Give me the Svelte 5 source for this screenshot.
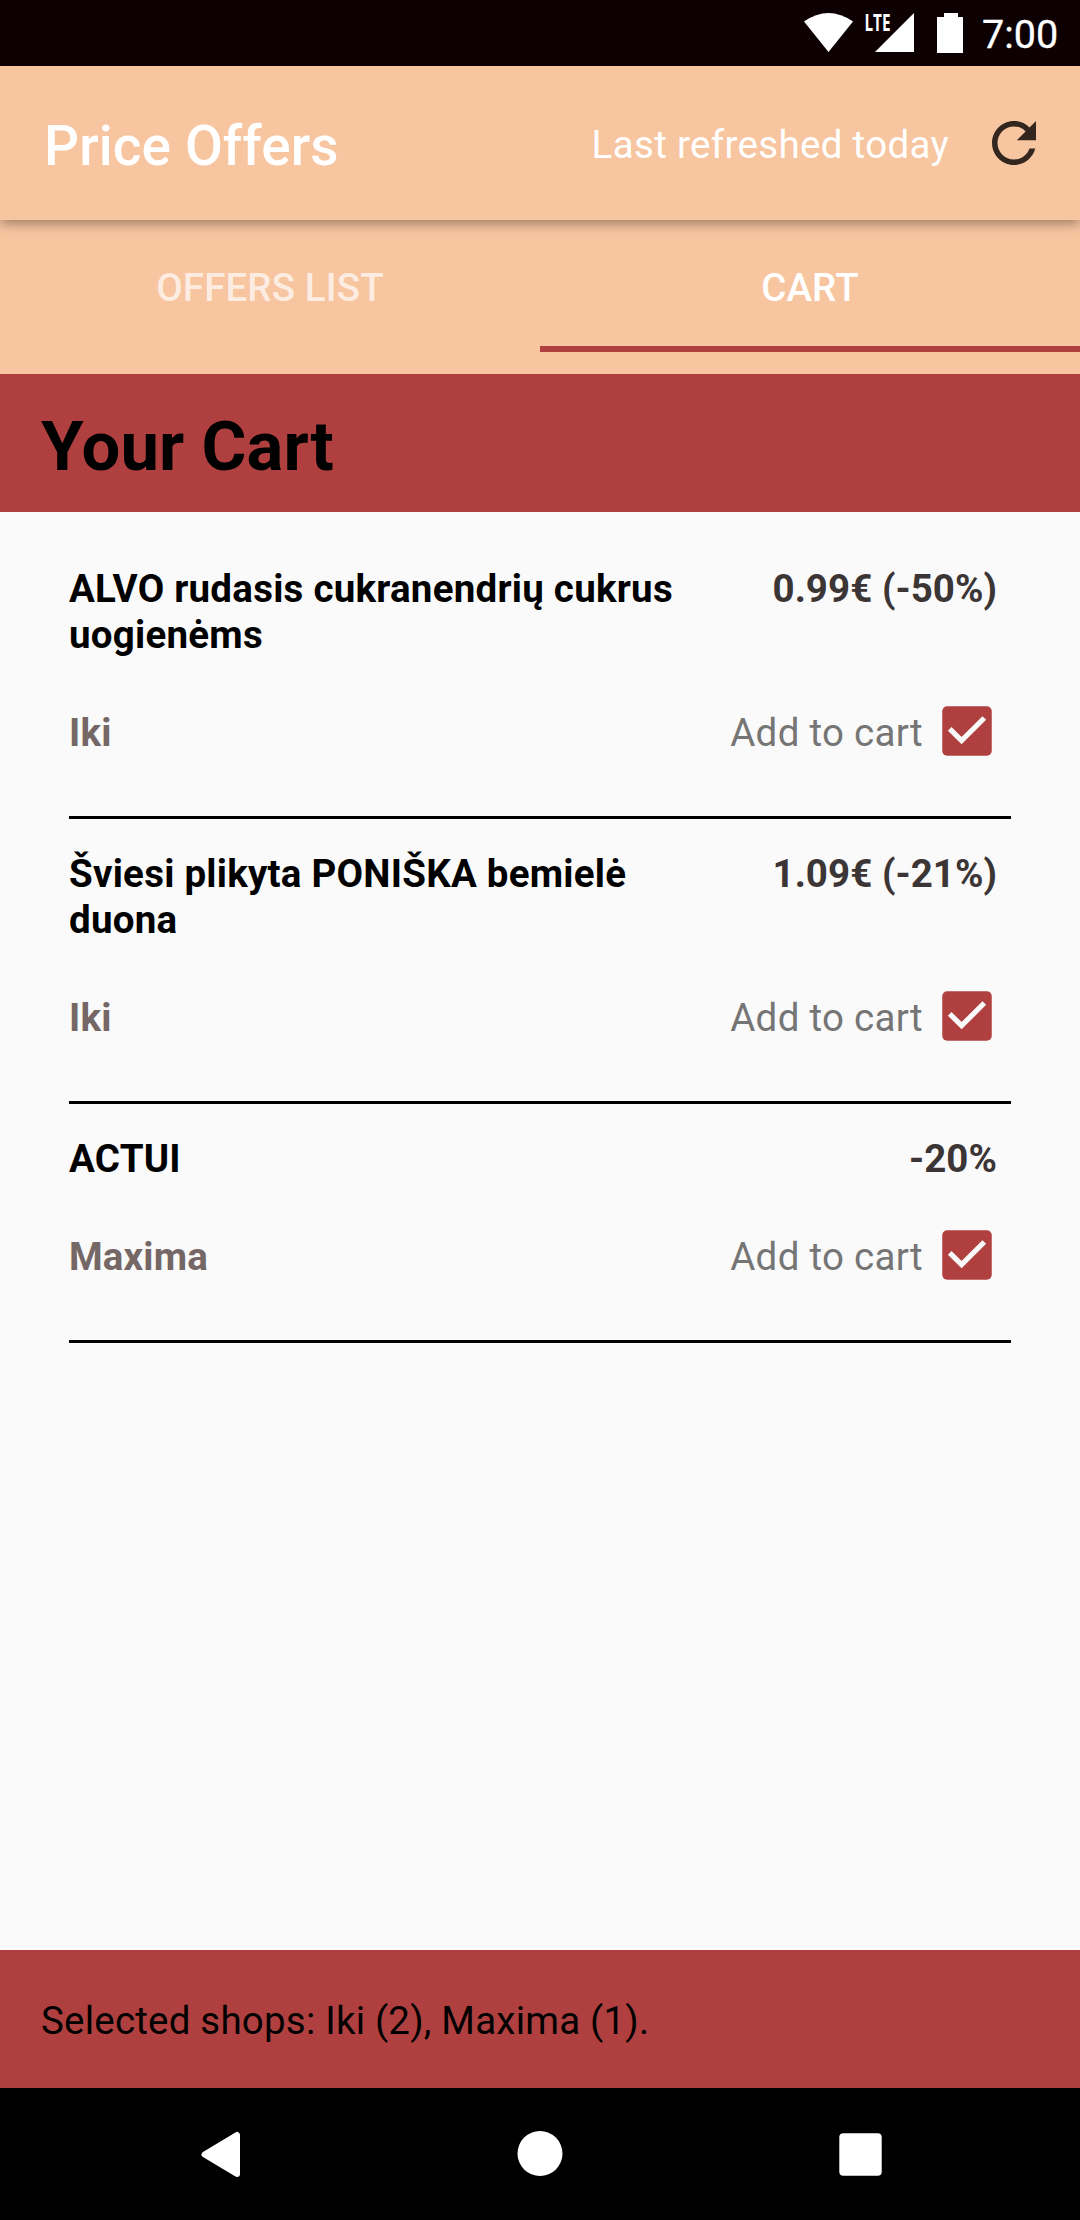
<script>
  let items = $state([
    { name: 'ALVO rudasis cukranendrių cukrus uogienėms', price: '0.99€ (-50%)', shop: 'Iki', checked: true },
    { name: 'Šviesi plikyta PONIŠKA bemielė duona', price: '1.09€ (-21%)', shop: 'Iki', checked: true },
    { name: 'ACTUI', price: '-20%', shop: 'Maxima', checked: true }
  ]);
</script>

<div class="screen">
  <div class="status">
    <svg class="status-icons" width="160" height="60" viewBox="804 0 160 60" fill="#fff">
      <path d="M804 21.5Q828.5 4.500 853 21.500L828.500 52Z" />
      <text class="lte" x="864.500" y="31" textLength="26" lengthAdjust="spacingAndGlyphs">LTE</text>
      <path d="M914 13V52H875Z" />
      <path d="M944 13H958V17H963V53H937V17H944Z" />
    </svg>
    <span class="clock">7:00</span>
  </div>

  <header class="appbar">
    <h1>Price Offers</h1>
    <span class="refreshed">Last refreshed today</span>
    <button class="refresh" aria-label="Refresh">
      <svg width="66" height="66" viewBox="0 0 24 24">
        <path d="M17.650 6.350C16.200 4.900 14.210 4 12 4c-4.420 0-7.990 3.580-7.990 8s3.570 8 7.990 8c3.730 0 6.840-2.550 7.730-6h-2.080c-.82 2.330-3.040 4-5.650 4-3.310 0-6-2.690-6-6s2.690-6 6-6c1.660 0 3.140.69 4.220 1.780L13 11h7V4l-2.350 2.350z" />
      </svg>
    </button>
  </header>

  <nav class="tabs">
    <div class="tab">OFFERS LIST</div>
    <div class="tab active">CART</div>
  </nav>

  <h2>Your Cart</h2>

  <main>
    {#each items as item}
      <article>
        <div class="row">
          <span class="name">{item.name}</span>
          <span class="price">{item.price}</span>
        </div>
        <div class="row">
          <span class="shop">{item.shop}</span>
          <span class="add">Add to cart</span>
          <button class="check" aria-label="Add to cart" onclick={() => (item.checked = !item.checked)}>
            <svg width="50" height="50" viewBox="0 0 50 50">
              <rect x=".25" y=".25" width="49.500" height="49.500" rx="5" />
              {#if item.checked}
                <path d="M7.700 22.900L19.600 34.700L42.300 12" />
              {/if}
            </svg>
          </button>
        </div>
      </article>
    {/each}
  </main>

  <footer>Selected shops: Iki (2), Maxima (1).</footer>

  <div class="navbar">
    <svg width="40" height="46" viewBox="0 0 40 46">
      <path d="M4.500 23.500L37 4V43Z" fill="#fff" stroke="#fff" stroke-width="6" stroke-linejoin="round" />
    </svg>
    <svg width="46" height="46" viewBox="0 0 46 46"><circle cx="23" cy="22.500" r="22.500" fill="#fff" /></svg>
    <svg width="43" height="43" viewBox="0 0 43 43"><rect x=".3" y=".3" width="42.400" height="42.400" rx="4" fill="#fff" /></svg>
  </div>
</div>

<style>
  :global(body) {
    margin: 0;
  }
  .screen {
    width: 1080px;
    height: 2220px;
    display: flex;
    flex-direction: column;
    overflow: hidden;
    background: #fafafa;
    font-family: Roboto, "Liberation Sans", sans-serif;
    font-size: 38.5px;
    line-height: 46px;
    color: #000;
  }
  button {
    border: 0;
    padding: 0;
    background: none;
  }
  svg {
    display: block;
    flex: none;
  }
  .status {
    height: 66px;
    flex: none;
    display: flex;
    justify-content: flex-end;
    align-items: flex-start;
    padding-right: 20px;
    background: #0d0003;
    color: #fff;
  }
  .status-icons {
    margin-right: 18px;
  }
  .lte {
    font: bold 24px "Open Sans", sans-serif;
  }
  .clock {
    width: 78px;
    padding-top: 12px;
    font-size: 39.5px;
    white-space: nowrap;
    -webkit-text-stroke: 0.3px #fff;
  }
  .appbar {
    height: 154px;
    flex: none;
    box-sizing: border-box;
    padding: 0 33px 0 44px;
    display: flex;
    align-items: center;
    background: #f7c5a0;
    color: #fff;
    box-shadow: 0 4px 11px rgba(0, 0, 0, 0.35);
    z-index: 1;
  }
  h1 {
    margin: 6px 0 0;
    flex: 1;
    font-size: 55px;
    line-height: 64px;
    font-weight: 500;
    letter-spacing: 0.08px;
  }
  .refreshed {
    margin: 4px 32px 0 0;
    letter-spacing: 0.33px;
  }
  .refresh {
    display: block;
    fill: #32261f;
  }
  .tabs {
    height: 154px;
    flex: none;
    display: flex;
    background: #f7c5a0;
    color: rgba(255, 255, 255, 0.7);
    font-weight: 500;
    letter-spacing: 0.12px;
  }
  .tab {
    flex: 1;
    height: 132px;
    box-sizing: border-box;
    padding-top: 45px;
    text-align: center;
  }
  .active {
    color: #fff;
    border-bottom: 6px solid #b0403f;
  }
  h2 {
    margin: 0;
    height: 138px;
    flex: none;
    box-sizing: border-box;
    padding: 32px 41px 0;
    font-size: 68.75px;
    line-height: 81px;
    font-weight: 700;
    letter-spacing: 0.1px;
    background: #b0403f;
  }
  main {
    flex: 1;
    padding: 22px 69px 0;
  }
  article {
    padding: 32px 0 60px;
    border-bottom: 3px solid #000;
    display: flex;
    flex-direction: column;
    gap: 52px;
    font-weight: 700;
  }
  .row {
    display: flex;
    align-items: flex-start;
  }
  .row:last-child {
    height: 46px;
  }
  .name {
    width: 640px;
    letter-spacing: 0.24px;
  }
  .price {
    margin: 0 14px 0 auto;
    color: #3c3535;
    letter-spacing: 0.05px;
  }
  .shop {
    flex: 1;
    color: #756766;
    letter-spacing: 0.15px;
  }
  .add {
    font-weight: 400;
    color: #757575;
    letter-spacing: 0.3px;
  }
  .check {
    margin: -4px 19px 0 19px;
  }
  .check rect {
    fill: #b0403f;
  }
  .check path {
    fill: none;
    stroke: #fafafa;
    stroke-width: 5.2;
  }
  footer {
    height: 138px;
    flex: none;
    box-sizing: border-box;
    padding: 48px 41px 0;
    letter-spacing: 0.21px;
    background: #b0403f;
  }
  .navbar {
    height: 132px;
    flex: none;
    box-sizing: border-box;
    padding: 0 198px 0 200px;
    display: flex;
    align-items: center;
    justify-content: space-between;
    background: #000;
  }
</style>
